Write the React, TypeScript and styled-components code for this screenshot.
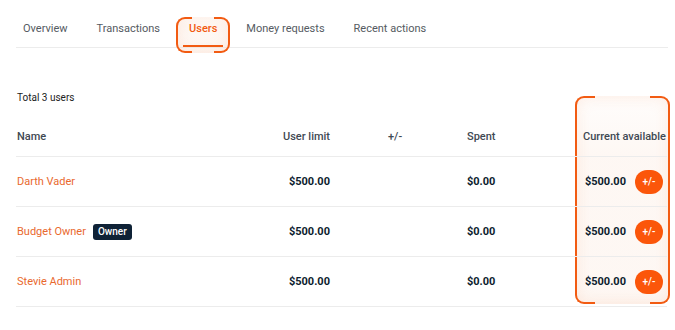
import styled, { createGlobalStyle, css } from "styled-components";

const pal = {
	orange: "#f25b12",
	orangeText: "#e9692e",
	navy: "#0d1d2e",
	head: "#3f4953",
	tab: "#555b62",
	line: "#ececec",
};

const GlobalStyle = createGlobalStyle`
	html, body {
		margin: 0;
		padding: 0;
		background: #ffffff;
	}
	body {
		font-family: Roboto, "Liberation Sans", Arial, sans-serif;
		-webkit-font-smoothing: antialiased;
	}
`;

const Page = styled.div`
	width: 675px;
	height: 330px;
	padding: 0 8px 0 16px;
	box-sizing: border-box;
	overflow: hidden;
`;

/* bracket highlight: two rounded arms with a gap top and bottom, sits behind content */
const Bracket = styled.div<{ $arm: number }>`
	position: absolute;
	z-index: -1;
	pointer-events: none;
	border-radius: 9px;
	box-shadow: inset 0 0 16px rgba(242, 110, 50, 0.14);
	background: linear-gradient(
		180deg,
		rgba(252, 236, 226, 0.1) 0%,
		rgba(252, 236, 226, 0.4) 30%,
		rgba(252, 236, 226, 0.4) 100%
	);
	&::before,
	&::after {
		content: "";
		position: absolute;
		top: 0;
		bottom: 0;
		width: ${(p) => p.$arm}px;
		border: 2px solid ${pal.orange};
		box-sizing: border-box;
	}
	&::before {
		left: 0;
		border-right: none;
		border-radius: 9px 0 0 9px;
	}
	&::after {
		right: 0;
		border-left: none;
		border-radius: 0 9px 9px 0;
	}
`;

const Tabs = styled.nav`
	display: flex;
	gap: 17px;
	padding-left: 1px;
	height: 47px;
	width: 651px;
	border-bottom: 1px solid ${pal.line};
	box-sizing: content-box;
	isolation: isolate;
`;

const Tab = styled.div<{ $active?: boolean }>`
	position: relative;
	padding: 22px 6px 0;
	height: 47px;
	box-sizing: border-box;
	font-size: 11px;
	line-height: 13px;
	color: ${pal.tab};
	white-space: nowrap;
	${(p) =>
		p.$active &&
		css`
			color: ${pal.orange};
			font-weight: 500;
			&::after {
				content: "";
				position: absolute;
				left: 0;
				right: 0;
				bottom: 0;
				height: 2px;
				background: ${pal.orange};
			}
		`}
`;

const TabBracket = styled(Bracket)`
	left: -7px;
	right: -7px;
	top: 17px;
	bottom: -6px;
`;

const Total = styled.div`
	margin: 43px 0 0 1px;
	font-size: 10px;
	line-height: 14px;
	color: #222;
`;

const TableWrap = styled.div`
	position: relative;
	margin-top: 11px;
	width: 651px;
	isolation: isolate;
`;

const ColBracket = styled(Bracket)`
	left: 559px;
	right: -3px;
	top: -20px;
	bottom: 3px;
`;

const Row = styled.div<{ $head?: boolean }>`
	display: grid;
	grid-template-columns: 200px 115px 135px 109px 92px;
	align-items: center;
	height: ${(p) => (p.$head ? 40 : 49)}px;
	border-bottom: 1px solid ${pal.line};
`;

const Cell = styled.div<{ $align?: "left" | "right"; $pad?: number }>`
	display: flex;
	align-items: center;
	justify-content: ${(p) => (p.$align === "right" ? "flex-end" : "flex-start")};
	padding-left: ${(p) => p.$pad ?? 1}px;
	padding-right: ${(p) => (p.$align === "right" ? 1 : 0)}px;
	white-space: nowrap;
`;

const Head = styled.span`
	font-size: 11px;
	font-weight: 500;
	color: ${pal.head};
`;

const Name = styled.span`
	font-size: 11px;
	color: ${pal.orangeText};
`;

const Badge = styled.span`
	margin-left: 7px;
	padding: 0 5px;
	height: 16px;
	line-height: 16px;
	border-radius: 3px;
	background: #0f2236;
	color: #ffffff;
	font-size: 10px;
	font-weight: 500;
`;

const Amount = styled.span`
	font-size: 11px;
	font-weight: 700;
	color: ${pal.navy};
`;

const AdjustButton = styled.button`
	margin-left: 9px;
	margin-right: 3px;
	width: 28px;
	height: 24px;
	border: none;
	border-radius: 12px;
	background: #fb560a;
	color: #ffffff;
	font-family: inherit;
	font-size: 10px;
	font-weight: 500;
	padding: 0;
`;

const tabs = ["Overview", "Transactions", "Users", "Money requests", "Recent actions"];

const users = [
	{ name: "Darth Vader", owner: false },
	{ name: "Budget Owner", owner: true },
	{ name: "Stevie Admin", owner: false },
];

export default function App() {
	return (
		<>
			<GlobalStyle />
			<Page>
				<Tabs>
					{tabs.map((t) => (
						<Tab key={t} $active={t === "Users"}>
							{t}
							{t === "Users" && <TabBracket $arm={16} />}
						</Tab>
					))}
				</Tabs>

				<Total>Total 3 users</Total>

				<TableWrap>
					<Row $head>
						<Cell><Head>Name</Head></Cell>
						<Cell $align="right"><Head>User limit</Head></Cell>
						<Cell $pad={57}><Head>+/-</Head></Cell>
						<Cell><Head>Spent</Head></Cell>
						<Cell $align="right"><Head>Current available</Head></Cell>
					</Row>
					{users.map((u) => (
						<Row key={u.name}>
							<Cell>
								<Name>{u.name}</Name>
								{u.owner && <Badge>Owner</Badge>}
							</Cell>
							<Cell $align="right"><Amount>$500.00</Amount></Cell>
							<Cell />
							<Cell><Amount>$0.00</Amount></Cell>
							<Cell $align="right">
								<Amount>$500.00</Amount>
								<AdjustButton>+/-</AdjustButton>
							</Cell>
						</Row>
					))}
					<ColBracket $arm={20} />
				</TableWrap>
			</Page>
		</>
	);
}
